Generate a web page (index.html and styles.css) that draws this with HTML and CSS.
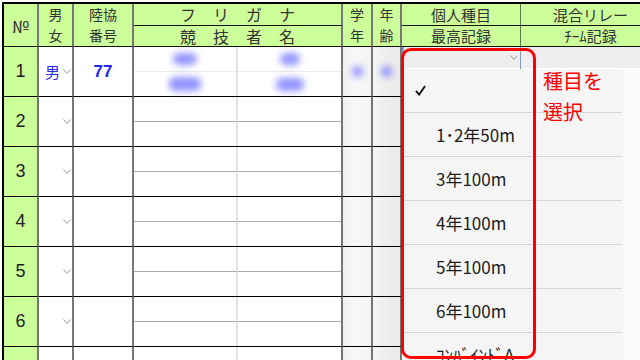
FILE: index.html
```html
<!DOCTYPE html>
<html lang="ja">
<head>
    <meta charset="UTF-8">
    <meta name="viewport" content="width=device-width, initial-scale=1.0">
    <title>選手登録</title>
    <link rel="stylesheet" href="styles.css">
</head>
<body>
    <div class="sheet">
        <!-- header -->
        <div class="hd span2 c1">№</div>
        <div class="hd span2 c2">男<br>女</div>
        <div class="hd span2 c3">陸協<br>番号</div>
        <div class="hd top c4 spaced">フリガナ</div>
        <div class="hd bottom c4 spaced">競技者名</div>
        <div class="hd span2 c5">学<br>年</div>
        <div class="hd span2 c6">年<br>齢</div>
        <div class="hd top c7">個人種目</div>
        <div class="hd bottom c7">最高記録</div>
        <div class="hd top c8">混合リレー</div>
        <div class="hd bottom c8">ﾁｰﾑ記録</div>

        <!-- row 1 -->
        <div class="cell no">1</div>
        <div class="cell sex"><span class="male">男</span><svg class="chev" viewBox="0 0 8 5"><polyline points="0.5,0.5 4,4.5 7.5,0.5"/></svg></div>
        <div class="cell code">77</div>
        <div class="cell names first">
            <div class="half"><span class="blur" style="width:24px;height:12px"></span></div>
            <div class="half"><span class="blur" style="width:20px;height:12px"></span></div>
            <div class="half"><span class="blur" style="width:32px;height:14px"></span></div>
            <div class="half"><span class="blur" style="width:28px;height:13px"></span></div>
        </div>
        <div class="cell grade"><span class="blur dot"></span></div>
        <div class="cell age"><span class="blur dot"></span></div>
        <div class="cell event"><div class="select focus"><svg class="chev" viewBox="0 0 8 5"><polyline points="0.5,0.5 4,4.5 7.5,0.5"/></svg></div></div>
        <div class="cell relay"><div class="select"><svg class="chev" viewBox="0 0 8 5"><polyline points="0.5,0.5 4,4.5 7.5,0.5"/></svg></div></div>

        <!-- row 2 -->
        <div class="cell no">2</div>
        <div class="cell sex"><svg class="chev" viewBox="0 0 8 5"><polyline points="0.5,0.5 4,4.5 7.5,0.5"/></svg></div>
        <div class="cell code"></div>
        <div class="cell names"><div class="half"></div><div class="half"></div><div class="half"></div><div class="half"></div></div>
        <div class="cell grade"></div>
        <div class="cell age"></div>
        <div class="cell event"></div>
        <div class="cell relay"></div>

        <!-- row 3 -->
        <div class="cell no">3</div>
        <div class="cell sex"><svg class="chev" viewBox="0 0 8 5"><polyline points="0.5,0.5 4,4.5 7.5,0.5"/></svg></div>
        <div class="cell code"></div>
        <div class="cell names"><div class="half"></div><div class="half"></div><div class="half"></div><div class="half"></div></div>
        <div class="cell grade"></div>
        <div class="cell age"></div>
        <div class="cell event"></div>
        <div class="cell relay"></div>

        <!-- row 4 -->
        <div class="cell no">4</div>
        <div class="cell sex"><svg class="chev" viewBox="0 0 8 5"><polyline points="0.5,0.5 4,4.5 7.5,0.5"/></svg></div>
        <div class="cell code"></div>
        <div class="cell names"><div class="half"></div><div class="half"></div><div class="half"></div><div class="half"></div></div>
        <div class="cell grade"></div>
        <div class="cell age"></div>
        <div class="cell event"></div>
        <div class="cell relay"></div>

        <!-- row 5 -->
        <div class="cell no">5</div>
        <div class="cell sex"><svg class="chev" viewBox="0 0 8 5"><polyline points="0.5,0.5 4,4.5 7.5,0.5"/></svg></div>
        <div class="cell code"></div>
        <div class="cell names"><div class="half"></div><div class="half"></div><div class="half"></div><div class="half"></div></div>
        <div class="cell grade"></div>
        <div class="cell age"></div>
        <div class="cell event"></div>
        <div class="cell relay"></div>

        <!-- row 6 -->
        <div class="cell no">6</div>
        <div class="cell sex"><svg class="chev" viewBox="0 0 8 5"><polyline points="0.5,0.5 4,4.5 7.5,0.5"/></svg></div>
        <div class="cell code"></div>
        <div class="cell names"><div class="half"></div><div class="half"></div><div class="half"></div><div class="half"></div></div>
        <div class="cell grade"></div>
        <div class="cell age"></div>
        <div class="cell event"></div>
        <div class="cell relay"></div>

        <!-- row 7 (only its top edge is on screen) -->
        <div class="cell no"></div>
        <div class="cell sex"></div>
        <div class="cell code"></div>
        <div class="cell names"><div class="half"></div><div class="half"></div><div class="half"></div><div class="half"></div></div>
        <div class="cell grade"></div>
        <div class="cell age"></div>
        <div class="cell event"></div>
        <div class="cell relay"></div>
    </div>

    <!-- event picker popup -->
    <div class="picker">
        <ul class="menu">
            <li><svg class="check" viewBox="0 0 12 12"><polyline points="1,6.5 4.5,10.5 11,1"/></svg></li>
            <li>1･2年50m</li>
            <li>3年100m</li>
            <li>4年100m</li>
            <li>5年100m</li>
            <li>6年100m</li>
            <li>ｺﾝﾊﾞｲﾝﾄﾞA</li>
        </ul>
    </div>
    <div class="callout"></div>
    <p class="note">種目を<br>選択</p>
</body>
</html>
```

FILE: styles.css
```css
/* entry sheet */
body {
    margin: 0;
    width: 640px;
    height: 360px;
    overflow: hidden;
    background: #fff;
    font-family: "Noto Sans CJK JP", sans-serif;
    color: #222;
}
.sheet {
    margin: 2px 0 0 2px;
    width: 658px;
    border-left: 2px solid #000;
    border-top: 2px solid #000;
    display: grid;
    grid-template-columns: 35px 35px 60px 209px 30px 29px 119px 139px;
    grid-template-rows: 22px 21px repeat(7, 50px);
}
.sheet > div {
    box-sizing: border-box;
}

/* header cells */
.hd {
    background-color: #ccff99;
    color: #333;
    font-size: 15px;
    line-height: 21px;
    text-align: center;
    border-right: 2px solid #777;
    border-bottom: 1px solid #111;
}
.hd.span2 {
    grid-row: 1 / 3;
    display: flex;
    align-items: center;
    justify-content: center;
    font-size: 14px;
}
.hd.top {
    grid-row: 1;
    line-height: 21px;
}
.hd.bottom {
    grid-row: 2;
    line-height: 20px;
}
.hd.c1 { grid-column: 1; font-size: 17px; }
.hd.c2 { grid-column: 2; }
.hd.c3 { grid-column: 3; }
.hd.c4 { grid-column: 4; }
.hd.c5 { grid-column: 5; }
.hd.c6 { grid-column: 6; }
.hd.c7 { grid-column: 7; border-right: 1px solid #5d7a4c; }
.hd.c8 { grid-column: 8; border-right: none; }
.hd.spaced {
    font-size: 16px;
    letter-spacing: 17px;
    padding-left: 17px;
}

/* body cells */
.cell {
    border-right: 2px solid #777;
    border-bottom: 1px solid #000;
    background: #fff;
}
.cell.no {
    background-color: #ccff99;
    font-family: "Liberation Sans", sans-serif;
    font-size: 18px;
    color: #222;
    display: flex;
    align-items: center;
    justify-content: center;
}
.cell.sex {
    display: flex;
    align-items: center;
    padding: 0 1px 0 6px;
}
.male {
    color: #2b2bf0;
    font-size: 15px;
}
.chev {
    width: 8px;
    height: 5px;
    margin-left: auto;
    fill: none;
    stroke: #9a9a9a;
    stroke-width: 1;
}
.cell.code {
    display: flex;
    align-items: center;
    justify-content: center;
    color: #2323ee;
    font-family: "Liberation Sans", sans-serif;
    font-weight: bold;
    font-size: 17px;
}
.cell.names {
    display: grid;
    grid-template-columns: 104px 1fr;
    grid-template-rows: 25px 24px;
}
.half {
    display: flex;
    align-items: center;
    justify-content: center;
}
.names .half:nth-child(odd) {
    border-right: 2px solid #e2e2e2;
}
.names .half:nth-child(-n+2) {
    border-bottom: 1px solid #aaa;
}
.names.first .half:nth-child(-n+2) {
    border-bottom-color: #ececec;
}
.cell.grade {
    background: linear-gradient(to right, #eeeeee, #f8f8f8 40%, #f4f4f4);
    display: flex;
    align-items: center;
    justify-content: center;
}
.cell.age {
    background: linear-gradient(to right, #f6f6f6, #ececec 60%, #ebebeb);
    display: flex;
    align-items: center;
    justify-content: center;
}
.cell.event {
    border-right: 1px solid #7a7a7a;
}
.cell.relay {
    border-right: none;
}
.select {
    height: 21px;
    background: #eeeeee;
    display: flex;
    align-items: center;
    padding-right: 2px;
    box-sizing: border-box;
}
.select.focus {
    border-left: 2px solid #7d9cc6;
    margin-right: -1px;
    border-right: 1px solid #7d9cc6;
}
.blur {
    display: inline-block;
    background: rgba(110, 110, 255, 0.75);
    border-radius: 6px;
    filter: blur(3.5px);
}
.blur.dot {
    width: 11px;
    height: 11px;
}

/* picker popup */
.picker {
    position: absolute;
    left: 404px;
    top: 69px;
    width: 236px;
    height: 291px;
    overflow: hidden;
    background: linear-gradient(to right, #f5f5f5 0, #f5f5f5 218px, #fafafa 222px);
}
.menu {
    list-style: none;
    margin: 0;
    padding: 0;
    width: 218px;
}
.menu li {
    height: 44px;
    box-sizing: border-box;
    border-bottom: 1px solid #d5d5d5;
    display: flex;
    align-items: center;
    padding-left: 32px;
    font-size: 17px;
    color: #1c1c1c;
}
.check {
    width: 11px;
    height: 11px;
    margin-left: -21px;
    fill: none;
    stroke: #111;
    stroke-width: 2;
}
.callout {
    position: absolute;
    left: 401px;
    top: 48px;
    width: 135px;
    height: 311px;
    box-sizing: border-box;
    border: 3px solid #ff0000;
    border-radius: 10px;
}
.note {
    position: absolute;
    left: 543px;
    top: 65px;
    margin: 0;
    color: #ff0000;
    font-size: 20px;
    line-height: 31px;
}
```
